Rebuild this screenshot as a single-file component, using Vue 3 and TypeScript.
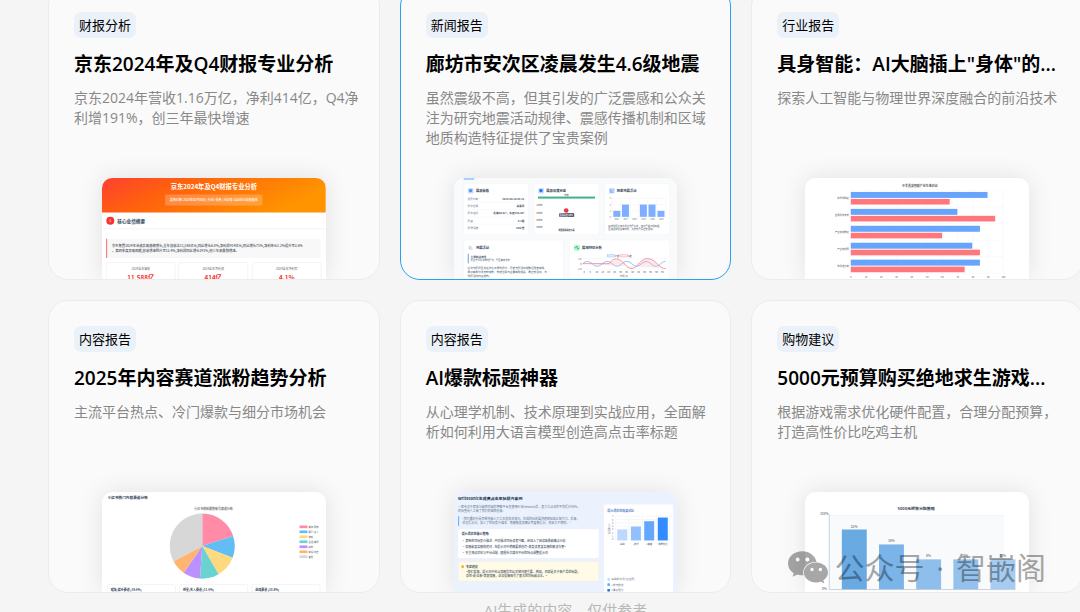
<script setup lang="ts">
interface Report {
  id: string
  tag: string
  title: string
  desc: string
  active?: boolean
  viewBox: string
}

const reports: Report[] = [
  { id: 'jd', tag: '财报分析', title: '京东2024年及Q4财报专业分析', desc: '京东2024年营收1.16万亿，净利414亿，Q4净利增191%，创三年最快增速', viewBox: '34 40 674 303' },
  { id: 'quake', tag: '新闻报告', title: '廊坊市安次区凌晨发生4.6级地震', desc: '虽然震级不高，但其引发的广泛震感和公众关注为研究地震活动规律、震感传播机制和区域地质构造特征提供了宝贵案例', active: true, viewBox: '10 25 674 303' },
  { id: 'robot', tag: '行业报告', title: '具身智能：AI大脑插上"身体"的...', desc: '探索人工智能与物理世界深度融合的前沿技术', viewBox: '30 25 674 303' },
  { id: 'trend', tag: '内容报告', title: '2025年内容赛道涨粉趋势分析', desc: '主流平台热点、冷门爆款与细分市场机会', viewBox: '34 37 674 303' },
  { id: 'headline', tag: '内容报告', title: 'AI爆款标题神器', desc: '从心理学机制、技术原理到实战应用，全面解析如何利用大语言模型创造高点击率标题', viewBox: '24 37 674 303' },
  { id: 'budget', tag: '购物建议', title: '5000元预算购买绝地求生游戏...', desc: '根据游戏需求优化硬件配置，合理分配预算，打造高性价比吃鸡主机', viewBox: '75 37 674 303' },
]

const metrics = [
  { x: 48, w: 206, label: '2024全年营收', value: '11,588亿' },
  { x: 265, w: 208, label: '2024全年净利润', value: '414亿' },
  { x: 487, w: 207, label: '2024全年净利率', value: '4.1%' },
]

const quakeFacts = [
  ['发震时刻', '2025-03-26 01:21'],
  ['震中位置', '永清县'],
  ['震中坐标', '北纬39.42°，东经116.60°'],
  ['震级', '4.2级'],
  ['震源深度', '20公里'],
]
const depthTicks = ['10km', '20km', '30km', '40km']
const quakeBars = [
  { x: 490, h: 18 }, { x: 516, h: 37 }, { x: 570, h: 37 }, { x: 596, h: 37 }, { x: 623, h: 18 },
]
const quakeYears = ['2016', '2017', '2018', '2019', '2020', '2025']
const waveTicks = Array.from({ length: 14 }, (_, i) => i * 5)

const robotRows = [
  { label: '技术成熟度', a: 412, b: 298 },
  { label: '应用场景丰富', a: 321, b: 435 },
  { label: '产业链完整度', a: 389, b: 275 },
  { label: '产业链协同', a: 366, b: 389 },
  { label: '市场增长率', a: 389, b: 343 },
]
const robotTicks = Array.from({ length: 11 }, (_, i) => i)

const pieData = [
  { label: '美妆/服饰', value: 72, color: '#ff8ba7' },
  { label: '明星/名人', value: 39, color: '#62bdf5' },
  { label: '游戏', value: 39, color: '#ffd97f' },
  { label: '生活/美食', value: 34, color: '#6ad3d0' },
  { label: '教育', value: 31, color: '#bd90ff' },
  { label: '影视/综艺', value: 27, color: '#ffb570' },
  { label: '其他', value: 118, color: '#d7d7d7' },
]
const slices = pieData.map((item, i) => {
  const start = pieData.slice(0, i).reduce((s, d) => s + d.value, 0)
  const end = start + item.value
  const at = (deg: number) => {
    const r = (deg * Math.PI) / 180
    return `${336 + 98 * Math.sin(r)} ${200 - 98 * Math.cos(r)}`
  }
  return { color: item.color, path: `M336 200L${at(start)}A98 98 0 0 1 ${at(end)}Z` }
})
const trendCards = [
  { x: 50, label: '服饰/娱乐赛道 (19.6%)' },
  { x: 268, label: '明星/名人赛道 (11.6%)' },
  { x: 486, label: '游戏赛道 (10.8%)' },
]

const clickBars = [
  { x: 516, h: 33, color: '#bcd8ff', label: '基础' },
  { x: 557, h: 42, color: '#92c0ff', label: '+技巧' },
  { x: 597, h: 58, color: '#65a7ff', label: '+情绪' },
  { x: 638, h: 69, color: '#338cff', label: '完整优化' },
]
const methodLines = [
  '·  清晰的目标受众描述 - 不仅描述目标读者兴趣，还加入了阅读场景和痛点分析',
  '·  情感和真实感构建词 - 在提示词中明确要求创造"激发读者真实感的解决方案"',
  '·  多重测试优化与平台适配 - 根据社交媒体平台的特点调整提示词',
]
const budgetBars = [
  { x: 186, h: 180, color: '#69aae3', label: '32%' },
  { x: 298, h: 135, color: '#7bb4e8', label: '16%' },
  { x: 410, h: 90, color: '#8dbeec', label: '8%' },
  { x: 522, h: 90, color: '#94c2ed', label: '8%' },
  { x: 634, h: 90, color: '#a6cdf1', label: '10%' },
]
</script>

<template>
  <main class="page">
    <section class="grid">
      <a v-for="r in reports" :key="r.id" href="#" class="card" :class="{ active: r.active }">
        <span class="tag">{{ r.tag }}</span>
        <h2 class="title">{{ r.title }}</h2>
        <p class="desc">{{ r.desc }}</p>
        <svg class="thumb" :viewBox="r.viewBox">
          <g v-if="r.id === 'jd'">
            <defs>
              <linearGradient id="jdHead" x1="0" y1="0" x2="1" y2="0.3">
                <stop offset="0" stop-color="#ff4030" />
                <stop offset="0.35" stop-color="#ff600e" />
                <stop offset="1" stop-color="#ff9400" />
              </linearGradient>
            </defs>
            <rect x="34" y="40" width="674" height="104" fill="url(#jdHead)" />
            <text x="371" y="73" font-size="19" font-weight="700" fill="#fff" text-anchor="middle">京东2024年及Q4财报专业分析</text>
            <rect x="224" y="90" width="293" height="33" rx="3" fill="#fff" opacity="0.22" />
            <text x="371" y="109" font-size="9" font-weight="500" fill="#fff" text-anchor="middle">发布日期: 2025年03月06日 | 行业: 电商 | 分析师: 自动化分析智能体</text>
            <circle cx="59" cy="169" r="12" fill="#f5342f" />
            <text x="59" y="173" font-size="11" fill="#fff" text-anchor="middle">1</text>
            <text x="80" y="175" font-size="14" font-weight="700" fill="#33475b">核心业绩摘要</text>
            <path d="M34 193H708" stroke="#eee" stroke-width="2" />
            <rect x="47" y="223" width="646" height="58" rx="4" fill="#f8f8f8" />
            <path d="M48 223V281" stroke="#f76b6b" stroke-width="3" />
            <text x="64" y="248" font-size="10" font-weight="500" fill="#444d57">京东集团2024年业绩实现稳健增长,全年营收达11,588亿元,同比增长6.8%,净利润414亿元,同比增长71%,净利率从2.2%提升至3.6%</text>
            <text x="64" y="263" font-size="10" font-weight="500" fill="#444d57">。第四季度表现亮眼,营收增速回升至13.4%,净利润同比增长191%,创三年来最快增速。</text>
            <g v-for="m in metrics" :key="m.x">
              <rect :x="m.x" y="295" :width="m.w" height="70" rx="4" fill="#fff" stroke="#eee" stroke-width="2" />
              <text :x="m.x + m.w / 2" y="318" font-size="9" fill="#666" text-anchor="middle">{{ m.label }}</text>
              <text :x="m.x + m.w / 2" y="346" font-size="19" font-weight="700" fill="#f5342f" text-anchor="middle">{{ m.value }}</text>
            </g>
          </g>

          <g v-else-if="r.id === 'quake'">
            <rect x="10" y="25" width="674" height="303" fill="#f8fafc" />
            <rect x="39" y="25" width="32" height="6" fill="#a6d0ff" />
            <g fill="#fff" stroke="#edf0f3">
              <rect x="39" y="42" width="195" height="153" rx="5" />
              <rect x="251" y="42" width="196" height="153" rx="5" />
              <rect x="464" y="42" width="195" height="153" rx="5" />
              <rect x="39" y="212" width="301" height="130" rx="5" />
              <rect x="358" y="212" width="301" height="130" rx="5" />
            </g>
            <rect x="52" y="55" width="17" height="17" rx="4" fill="#c7ddff" />
            <circle cx="60" cy="63" r="5" fill="#4b92ff" />
            <rect x="264" y="55" width="17" height="17" rx="4" fill="#c7ddff" />
            <circle cx="272" cy="63" r="5" fill="#1676ff" />
            <rect x="477" y="55" width="17" height="17" rx="4" fill="#c7ddff" />
            <path d="M481 58V68H490M483 62L487 65L491 59" fill="none" stroke="#68a1f6" stroke-width="2" />
            <g font-size="10" font-weight="700" fill="#334155">
              <text x="76" y="67">震源参数</text>
              <text x="288" y="67">震源深度示意</text>
              <text x="500" y="67">历史地震活动</text>
              <text x="76" y="238">地震活动</text>
              <text x="396" y="238">震相特征分析</text>
            </g>
            <g v-for="(f, i) in quakeFacts" :key="f[0]" font-size="8">
              <text x="51" :y="91 + i * 22" fill="#64748b">{{ f[0] }}</text>
              <text x="222" :y="91 + i * 22" font-weight="700" fill="#334155" text-anchor="end">{{ f[1] }}</text>
              <path v-if="i < 4" :d="`M51 ${98 + i * 22}H222`" stroke="#f0f1f3" />
            </g>
            <text x="349" y="80" font-size="7" fill="#444" text-anchor="middle">地表</text>
            <rect x="263" y="81" width="172" height="6" fill="#40b28a" />
            <text v-for="(d, i) in depthTicks" :key="d" x="258" :y="110 + i * 22" font-size="7" fill="#444">{{ d }}</text>
            <circle cx="348" cy="123" r="24" fill="none" stroke="#ffebeb" />
            <circle cx="348" cy="123" r="7" fill="#e93644" />
            <rect x="327" y="131" width="45" height="11" rx="2" fill="#26364a" />
            <text x="349" y="139" font-size="6" font-weight="700" fill="#fff" text-anchor="middle">震源深度20km</text>
            <text x="349" y="184" font-size="6" font-weight="700" fill="#333" text-anchor="middle">地震震源深度示意</text>
            <g stroke="#eee">
              <path v-for="i in 4" :key="i" :d="`M486 ${67 + i * 19}H646`" />
              <path v-for="i in 7" :key="`v${i}`" :d="`M${459 + i * 27} 86V143`" />
            </g>
            <rect v-for="b in quakeBars" :key="b.x" :x="b.x" :y="142 - b.h" width="21" :height="b.h" fill="#7daeff" />
            <g font-size="6" fill="#666">
              <text v-for="i in 4" :key="i" x="479" :y="70 + i * 19">{{ 4 - i }}</text>
              <text v-for="(y, i) in quakeYears" :key="y" :x="500 + i * 27" y="153" text-anchor="middle">{{ y }}</text>
            </g>
            <g font-size="7" fill="#475569">
              <text x="475" y="172">廊坊地区近年共发生地震多次，最大震级不超四级，</text>
              <text x="475" y="183">区域活动性总体较低，此次地震属正常活动。</text>
            </g>
            <path d="M56 229V239H66M58 234L61 232L65 235" fill="none" stroke="#4a5568" stroke-width="1" />
            <rect x="371" y="226" width="18" height="18" rx="4" fill="#b7f5d4" />
            <path d="M373 235H377L380 230L383 240L387 235" fill="none" stroke="#22a66b" stroke-width="2" />
            <path d="M53 253V282" stroke="#5aa0f7" stroke-width="3" />
            <g fill="#475569">
              <text x="60" y="265" font-size="8" font-weight="700">主要构造背景</text>
              <text x="60" y="276" font-size="7">发生于河北平原地震带，震区断裂发育</text>
              <text x="51" y="299" font-size="8">此次地震震区处在华北平原地震带，历史地震活动频繁但强度有限，</text>
              <text x="51" y="311" font-size="8">周边断裂带发育较完整，构造位置与主要断裂相关，属正常活动，与</text>
              <text x="51" y="323" font-size="8">地震活动特征相符。</text>
            </g>
            <rect x="472" y="256" width="22" height="7" fill="#dcecff" stroke="#70aaff" />
            <rect x="510" y="256" width="22" height="7" fill="#ffe2e4" stroke="#ff7b87" />
            <g font-size="7" fill="#444">
              <text x="496" y="263">P波</text>
              <text x="534" y="263">S波</text>
              <text x="384" y="271">1.0</text>
              <text x="390" y="286">0</text>
              <text x="382" y="301">-1.0</text>
              <text v-for="(t, i) in waveTicks" :key="t" :x="400 + i * 18" y="312">{{ t }}</text>
              <text x="522" y="324" text-anchor="middle">时间 (s)</text>
            </g>
            <path d="M398 268H648M398 283H648M398 300H648" stroke="#eee" />
            <path d="M398 283C408 273 417 275 427 284S446 293 456 284S475 273 486 283S505 293 515 284S534 273 545 283S564 293 574 284S593 273 603 283S622 293 632 284S645 277 648 276" fill="none" stroke="#58a5f5" stroke-width="2" />
            <path d="M398 283H478C490 262 508 266 523 283S548 304 563 287S588 264 604 270S631 299 648 298" fill="#fba9af" fill-opacity="0.25" stroke="#f7717d" stroke-width="2" />
          </g>

          <g v-else-if="r.id === 'robot'">
            <text x="376" y="53" font-size="9" font-weight="700" fill="#555" text-anchor="middle">中美具身智能产业生态对比</text>
            <g stroke="#eef0f2">
              <path v-for="i in robotTicks" :key="i" :d="`M${168 + i * 46} 62V313`" />
              <path v-for="i in 6" :key="`h${i}`" :d="`M168 ${12 + i * 50}H628`" />
            </g>
            <g v-for="(row, i) in robotRows" :key="row.label">
              <rect x="168" :y="67 + i * 51" :width="row.a" height="18" fill="#68a3fc" />
              <rect x="168" :y="88 + i * 51" :width="row.b" height="17" fill="#ff777b" />
              <text x="162" :y="89 + i * 51" font-size="7" fill="#555" text-anchor="end">{{ row.label }}</text>
            </g>
            <text v-for="i in robotTicks" :key="`t${i}`" :x="168 + i * 46" y="326" font-size="7" fill="#555" text-anchor="middle">{{ i * 10 }}</text>
          </g>

          <g v-else-if="r.id === 'trend'">
            <text x="51" y="59" font-size="11" font-weight="700" fill="#334155">小红书热门内容赛道分布</text>
            <text x="370" y="90" font-size="9" font-weight="500" fill="#555" text-anchor="middle">小红书涨粉最快账号赛道分布</text>
            <path v-for="s in slices" :key="s.color" :d="s.path" :fill="s.color" />
            <g v-for="(p, i) in pieData" :key="p.label">
              <rect x="629" :y="138 + i * 15" width="24" height="8" :fill="p.color" />
              <text x="656" :y="145 + i * 15" font-size="7" fill="#555">{{ p.label }}</text>
            </g>
            <g v-for="c in trendCards" :key="c.x">
              <rect :x="c.x" y="316" width="205" height="60" rx="4" fill="#fff" stroke="#eee" stroke-width="2" />
              <text :x="c.x + 10" y="335" font-size="9" font-weight="700" fill="#334155">{{ c.label }}</text>
            </g>
          </g>

          <g v-else-if="r.id === 'headline'">
            <rect x="24" y="37" width="674" height="303" fill="#ebf2fe" />
            <text x="36" y="60" font-size="12" font-weight="700" fill="#24364e">Writesonic生成高点击率标题内案例</text>
            <g font-size="9" fill="#64748b">
              <text x="36" y="84">一家专注于健康与营养内容的博客平台在使用AI Writesonic后，其文章点击率平均提升55%，</text>
              <text x="36" y="97">的标签是人工审了我们的营销创意:</text>
              <text x="49" y="121">"我们最初只是简单地输入文章主题和关键词，生成的标题虽然通顺但缺乏吸引力。后来，</text>
              <text x="49" y="134">优化提示词，加入了目标受众描述、情感触发和痛点等要素提示，效果大不相同。"</text>
            </g>
            <path d="M38 110V139" stroke="#5aaafa" stroke-width="3" />
            <rect x="36" y="149" width="424" height="87" rx="5" fill="#fff" />
            <text x="47" y="167" font-size="9" font-weight="700" fill="#334155">提示词优化核心策略:</text>
            <text v-for="(line, i) in methodLines" :key="line" x="47" :y="187 + i * 18" font-size="9" font-weight="500" fill="#475569">{{ line }}</text>
            <rect x="37" y="247" width="423" height="58" rx="5" fill="#fffbe6" stroke="#f5edc6" />
            <circle cx="50" cy="262" r="4" fill="#ffa418" />
            <text x="60" y="265" font-size="9" font-weight="700" fill="#475569">专家建议</text>
            <text x="60" y="280" font-size="9" font-weight="500" fill="#475569">"我们发现，提示词中包含情感信息比关键词更重要。例如，同样是关于新产品的标题，</text>
            <text x="60" y="293" font-size="9" font-weight="500" fill="#475569">命性'或'全新'等更情感，这会提高吸引了更大的目标和点击。"</text>
            <rect x="476" y="75" width="208" height="280" rx="4" fill="#fff" />
            <text x="486" y="96" font-size="9" font-weight="700" fill="#527bc7">提示词优化效果对比</text>
            <g stroke="#e6ebf1">
              <path v-for="i in 8" :key="i" :d="`M510 ${100 + i * 10}H673`" />
              <path v-for="i in 5" :key="`v${i}`" :d="`M${469 + i * 41} 110V183`" />
            </g>
            <g font-size="7" fill="#64748b">
              <text v-for="i in 8" :key="i" x="500" :y="103 + i * 10">{{ 8 - i }}</text>
              <text x="0" y="0" transform="translate(494 164) rotate(-90)">点击率 (%)</text>
            </g>
            <g v-for="b in clickBars" :key="b.x">
              <rect :x="b.x" :y="183 - b.h" width="30" :height="b.h" :fill="b.color" />
              <text :x="b.x + 15" y="196" font-size="7" fill="#475569" text-anchor="middle">{{ b.label }}</text>
            </g>
            <g font-size="8" fill="#64748b">
              <rect x="486" y="296" width="8" height="8" rx="2" fill="#bfdcff" />
              <text x="498" y="303">基础提示词 (仅主题)</text>
              <rect x="486" y="312" width="8" height="8" rx="2" fill="#63afff" />
              <text x="498" y="319">+技巧描述</text>
              <rect x="486" y="329" width="8" height="8" rx="2" fill="#1976ed" />
              <text x="498" y="336">+情感强化</text>
            </g>
          </g>

          <g v-else>
            <text x="410" y="91" font-size="12" font-weight="700" fill="#334155" text-anchor="middle">5000元预算分配策略</text>
            <rect x="148" y="107" width="524" height="224" fill="#f8fafc" stroke="#e8edf2" />
            <path d="M148 104V331H709" fill="none" stroke="#c8d0dc" stroke-width="3" />
            <text x="146" y="106" font-size="10" fill="#555" text-anchor="end">100%</text>
            <text x="141" y="331" font-size="10" fill="#555" text-anchor="end">0%</text>
            <g v-for="b in budgetBars" :key="b.x">
              <rect :x="b.x" :y="330 - b.h" width="75" :height="b.h" :fill="b.color" />
              <text :x="b.x + 37" :y="324 - b.h" font-size="10" fill="#555" text-anchor="middle">{{ b.label }}</text>
            </g>
          </g>
        </svg>
      </a>
    </section>
    <p class="note">AI生成的内容，仅供参考</p>

    <div class="watermark">
      <svg class="wechat" viewBox="0 0 120 98">
        <path fill-rule="evenodd" d="M43 0C19 0 0 16 0 36C0 48 6 59 17 66L14 77L28 70C33 72 39 73 46 72C41 50 60 31 86 33C82 14 65 0 43 0ZM29 19A6 6 0 1 1 29 31A6 6 0 1 1 29 19ZM58 19A6 6 0 1 1 58 31A6 6 0 1 1 58 19Z" />
        <path fill-rule="evenodd" d="M84 34C64 34 48 47 48 64C48 81 64 94 84 94C89 94 94 93 98 91L109 97L106 87C115 82 120 73 120 64C120 47 104 34 84 34ZM72 50A5 5 0 1 1 72 60A5 5 0 1 1 72 50ZM97 50A5 5 0 1 1 97 60A5 5 0 1 1 97 50Z" />
      </svg>
      <span>公众号<span class="dot"> · </span>智嵌阁</span>
    </div>
  </main>
</template>

<style>
body {
  margin: 0;
  background: #f5f5f5;
}
</style>

<style scoped>
.page {
  position: relative;
  height: 100vh;
  overflow: hidden;
  background: #f5f5f5;
  font-family: "Open Sans", "Noto Sans CJK SC", sans-serif;
}
.grid {
  display: grid;
  grid-template-columns: repeat(3, minmax(0, 1fr));
  gap: 20px;
  margin: -14px -3px 0 48px;
}
.card {
  display: flex;
  flex-direction: column;
  align-items: flex-start;
  box-sizing: border-box;
  padding: 25px 25px 0;
  border: 1px solid #ececec;
  border-radius: 20px;
  background: #fafafa;
  overflow: hidden;
  color: #000;
  text-decoration: none;
}
.card.active {
  border-color: #2b9ff2;
}
.tag {
  padding: 0 5px;
  border-radius: 7px;
  background: #ebf1f8;
  font-size: 13px;
  line-height: 26px;
}
.title {
  margin: 12px 0 0;
  font-size: 19px;
  font-weight: 600;
  line-height: 28px;
  white-space: nowrap;
}
.desc {
  min-height: 60px;
  margin: 10px -8px 30px 0;
  color: #888;
  font-size: 14px;
  line-height: 20px;
}
.thumb {
  display: block;
  align-self: center;
  width: 80%;
  border-radius: 10px 10px 0 0;
  background: #fff;
  box-shadow: 0 0 24px rgba(0, 0, 0, 0.1);
  font-family: "Noto Sans CJK SC", sans-serif;
}
.note {
  margin: 6px -3px 0 48px;
  color: #b8b8b8;
  font-size: 15px;
  line-height: 22px;
  text-align: center;
}
.watermark {
  position: absolute;
  right: 34px;
  bottom: 22px;
  display: flex;
  align-items: center;
  gap: 7px;
  color: #000;
  font-family: "Noto Sans CJK SC", sans-serif;
  font-size: 30px;
  line-height: 44px;
  opacity: 0.34;
}
.dot {
  padding: 0 4px;
  font-family: "Open Sans", sans-serif;
}
.wechat {
  width: 40px;
  height: 33px;
  fill: currentColor;
}
</style>
